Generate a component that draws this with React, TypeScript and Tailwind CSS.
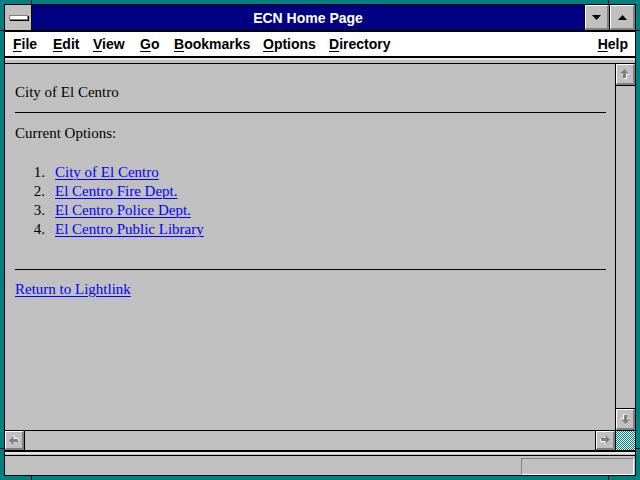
import React from "react";

const ArrowIcon = ({ dir }: { dir: "up" | "down" | "left" | "right" }) => {
  const rot = { up: 0, right: 90, down: 180, left: 270 }[dir];
  return (
    <svg width="12" height="12" viewBox="0 0 12 12" style={{ transform: `rotate(${rot}deg)` }}>
      <polygon points="5.5,1 10,5.5 7,5.5 7,10 4,10 4,5.5 1,5.5" fill="#ffffff" transform="translate(1,1)" />
      <polygon points="5.5,1 10,5.5 7,5.5 7,10 4,10 4,5.5 1,5.5" fill="#808080" />
    </svg>
  );
};

const ScrollBtn = ({ dir, cls }: { dir: "up" | "down" | "left" | "right"; cls: string }) => (
  <div
    className={`${cls} bg-[#c0c0c0] border-t border-l border-t-white border-l-white border-b-2 border-r-2 border-b-[#808080] border-r-[#808080] flex items-center justify-center`}
  >
    <ArrowIcon dir={dir} />
  </div>
);

const MenuItem = ({ first, rest, w }: { first: string; rest: string; w?: string }) => (
  <div className={`${w ?? ""} shrink-0`}>
    <span className="underline underline-offset-[2px] decoration-1">{first}</span>
    {rest}
  </div>
);

export default function App() {
  const items = [
    "City of El Centro",
    "El Centro Fire Dept.",
    "El Centro Police Dept.",
    "El Centro Public Library",
  ];
  return (
    <div className="w-[640px] h-[480px] bg-[#008080] p-[4px] relative overflow-hidden">
      {/* frame corner marks */}
      <div className="absolute left-[31px] top-0 w-[1px] h-[4px] bg-black" />
      <div className="absolute left-[608px] top-0 w-[1px] h-[4px] bg-black" />
      <div className="absolute left-[31px] bottom-0 w-[1px] h-[4px] bg-black" />
      <div className="absolute left-[608px] bottom-0 w-[1px] h-[4px] bg-black" />
      <div className="absolute left-0 top-[30px] w-[4px] h-[1px] bg-black" />
      <div className="absolute right-0 top-[30px] w-[4px] h-[1px] bg-black" />
      <div className="absolute left-0 top-[448px] w-[4px] h-[1px] bg-black" />
      <div className="absolute right-0 top-[448px] w-[4px] h-[1px] bg-black" />

      <div className="h-full border border-black flex flex-col bg-[#c0c0c0]">
        {/* title bar */}
        <div className="h-[25px] flex shrink-0">
          <div className="w-[27px] border-r border-black bg-[#c0c0c0] flex items-center justify-center">
            <div className="w-[19px] h-[5px] bg-white border border-[#808080] shadow-[1px_1px_0_#000]" />
          </div>
          <div className="flex-1 bg-[#000080] flex items-center justify-center pt-[2px] text-white font-bold text-[14px] font-['Liberation_Sans',Arial,sans-serif]">
            ECN Home Page
          </div>
          <div className="w-[25px] border-l border-black">
            <div className="w-full h-full bg-[#c0c0c0] border-t border-l border-t-white border-l-white border-b-2 border-r-2 border-b-[#808080] border-r-[#808080] flex items-center justify-center">
              <svg width="9" height="5" viewBox="0 0 9 5">
                <polygon points="0,0 9,0 4.5,5" fill="#000" />
              </svg>
            </div>
          </div>
          <div className="w-[26px] border-l border-black">
            <div className="w-full h-full bg-[#c0c0c0] border-t border-l border-t-white border-l-white border-b-2 border-r-2 border-b-[#808080] border-r-[#808080] flex items-center justify-center">
              <svg width="9" height="5" viewBox="0 0 9 5">
                <polygon points="0,5 9,5 4.5,0" fill="#000" />
              </svg>
            </div>
          </div>
        </div>
        <div className="h-[2px] bg-black shrink-0" />
        {/* menu */}
        <div className="h-[24px] bg-white flex items-center pl-[8px] pr-[7px] text-black font-bold text-[14px] font-['Liberation_Sans',Arial,sans-serif] shrink-0">
          <MenuItem first="F" rest="ile" w="w-[40px]" />
          <MenuItem first="E" rest="dit" w="w-[40px]" />
          <MenuItem first="V" rest="iew" w="w-[47px]" />
          <MenuItem first="G" rest="o" w="w-[34px]" />
          <MenuItem first="B" rest="ookmarks" w="w-[89px]" />
          <MenuItem first="O" rest="ptions" w="w-[66px]" />
          <MenuItem first="D" rest="irectory" />
          <div className="ml-auto">
            <span className="underline underline-offset-[2px] decoration-1">H</span>elp
          </div>
        </div>
        <div className="h-[2px] bg-black shrink-0" />
        <div className="h-[2px] bg-[#e8e8e8] shrink-0" />
        <div className="h-[3px] bg-[#c0c0c0] shrink-0" />
        <div className="h-[1px] bg-black shrink-0" />

        {/* main */}
        <div className="h-[366px] flex shrink-0">
          <div className="flex-1 px-[10px] pt-[19px] font-['Liberation_Serif','Times_New_Roman',serif] text-[15px] leading-[19px] text-black">
            <p>City of El Centro</p>
            <div className="mt-[10px] h-[1px] bg-black mr-[-1px]" />
            <p className="mt-[11px]">Current Options:</p>
            <div className="mt-[20px]">
              {items.map((t, i) => (
                <div key={t} className="flex">
                  <span className="w-[30px] text-right">{i + 1}.</span>
                  <a className="ml-[10px] text-[#0000ff] underline underline-offset-[2px] decoration-1" href="#">
                    {t}
                  </a>
                </div>
              ))}
            </div>
            <div className="mt-[30px] h-[1px] bg-black mr-[-1px]" />
            <a className="block mt-[10px] text-[#0000ff] underline underline-offset-[2px] decoration-1 w-max" href="#">
              Return to Lightlink
            </a>
          </div>
          <div className="w-[20px] border-l border-black flex flex-col">
            <ScrollBtn dir="up" cls="h-[21px] shrink-0" />
            <div className="h-[1px] bg-black shrink-0" />
            <div className="flex-1" />
            <div className="h-[1px] bg-black shrink-0" />
            <ScrollBtn dir="down" cls="h-[21px] shrink-0" />
          </div>
        </div>
        <div className="h-[1px] bg-black shrink-0" />
        {/* horizontal scrollbar */}
        <div className="h-[19px] flex shrink-0">
          <ScrollBtn dir="left" cls="w-[19px] h-full shrink-0" />
          <div className="w-[1px] bg-black" />
          <div className="flex-1" />
          <div className="w-[1px] bg-black" />
          <ScrollBtn dir="right" cls="w-[19px] h-full shrink-0" />
          <div className="w-[1px] bg-black" />
          <div className="w-[19px] bg-[repeating-conic-gradient(#008080_0%_25%,#ffffff_0%_50%)] bg-[length:2px_2px]" />
        </div>
        <div className="h-[2px] bg-black shrink-0" />
        <div className="h-[2px] bg-[#e8e8e8] shrink-0" />
        <div className="h-[1px] bg-[#c0c0c0] shrink-0" />
        <div className="h-[1px] bg-black shrink-0" />
        {/* status bar */}
        <div className="flex-1 flex justify-end pt-[2px] pr-[1px]">
          <div className="w-[113px] h-[17px] border-t border-l border-t-[#808080] border-l-[#808080] border-b border-r border-b-white border-r-white" />
        </div>
      </div>
    </div>
  );
}
